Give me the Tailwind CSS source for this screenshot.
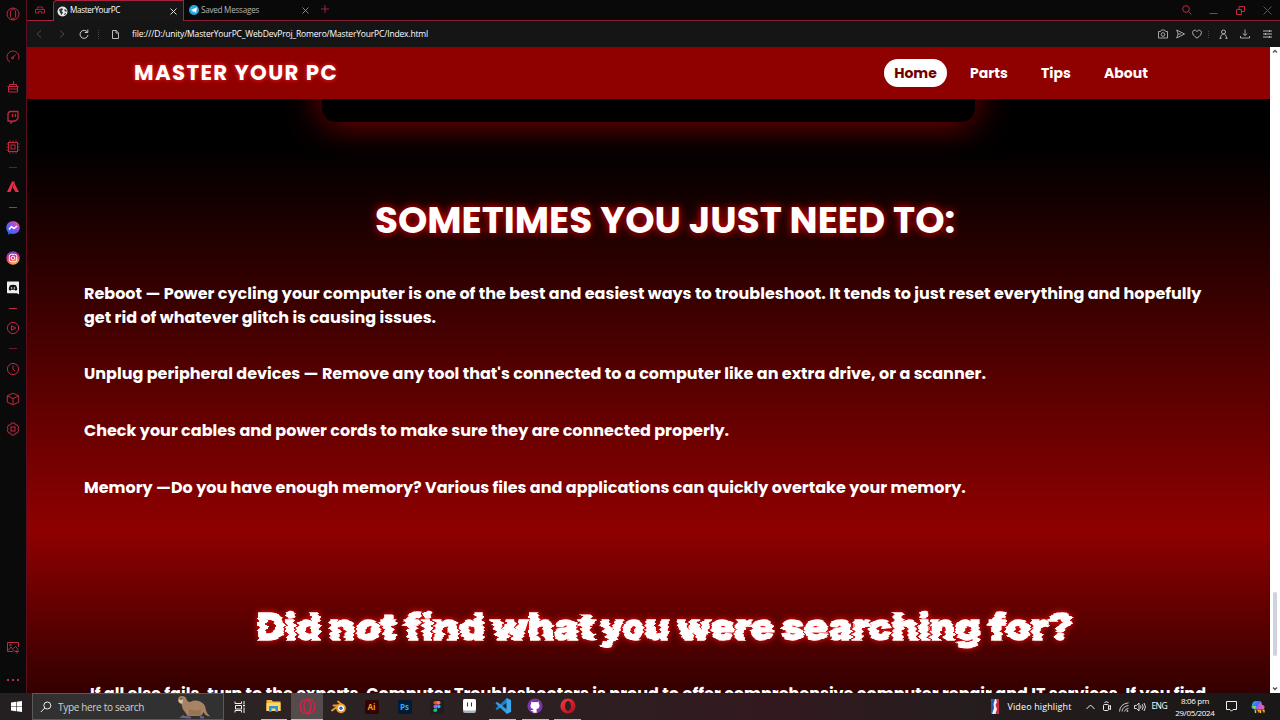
<!DOCTYPE html>
<html lang="en">
<head>
<meta charset="utf-8">
<title>MasterYourPC</title>
<script src="https://cdn.jsdelivr.net/npm/@tailwindcss/browser@4"></script>
</head>
<body class="w-[1280px] h-[720px] overflow-hidden bg-black flex flex-col font-['Open_Sans',sans-serif]">
<svg class="absolute size-0">
  <defs>
    <linearGradient id="msg" x1="0" y1="1" x2="1" y2="0"><stop offset="0" stop-color="#0a7cff"/><stop offset=".55" stop-color="#8a4cf5"/><stop offset="1" stop-color="#ff5c80"/></linearGradient>
    <linearGradient id="ig" x1=".2" y1="0" x2=".5" y2="1"><stop offset="0" stop-color="#6a3be0"/><stop offset=".5" stop-color="#e0307a"/><stop offset="1" stop-color="#fdb53c"/></linearGradient>
    <linearGradient id="cp" x1="0" y1="0" x2="1" y2=".6"><stop offset="0" stop-color="#2ab8f2"/><stop offset=".45" stop-color="#3b6cf0"/><stop offset=".6" stop-color="#c25ae0"/><stop offset="1" stop-color="#f25a9c"/></linearGradient>
    <linearGradient id="op" x1="0" y1="0" x2="1" y2="1"><stop offset="0" stop-color="#ff3b44"/><stop offset="1" stop-color="#a80a14"/></linearGradient>
  </defs>
</svg>

<div class="flex h-[693px]">
  <!-- GX sidebar -->
  <aside class="w-[27px] shrink-0 bg-[#0a0a0a] border-r border-[#5c0f22] flex flex-col items-center text-[#c2283f]">
    <div class="h-[27px] flex items-center"><svg width="14" height="14" viewBox="0 0 14 14" fill="none" stroke="currentColor"><circle cx="7" cy="7" r="6"/><ellipse cx="7" cy="7" rx="2.7" ry="5"/></svg></div>
    <div class="h-[30px] mt-[15px] flex items-center"><svg width="14" height="14" viewBox="0 0 14 14" fill="none" stroke="currentColor"><path d="M4 12.2A6 6 0 1 1 12.4 9.6"/><path d="M9.5 4.5 7 7.5"/><circle cx="6.5" cy="8" r="1"/></svg></div>
    <div class="h-[30px] flex items-center"><svg width="14" height="14" viewBox="0 0 14 14" fill="none" stroke="currentColor"><path d="M1.500 6.500h11M2.500 6.500v5.500h9V6.500M3 9h8M3.500 6.500V4.500h7v2M7.500 4.500V1"/></svg></div>
    <div class="h-[30px] flex items-center"><svg width="14" height="14" viewBox="0 0 14 14" fill="none" stroke="currentColor"><path stroke-width="1.300" d="M3.500 1.500h8.500v7l-2.500 2.500H7L5 13v-2H2V3.500zM6.500 4v3M9.500 4v3"/></svg></div>
    <div class="h-[30px] flex items-center"><svg width="14" height="14" viewBox="0 0 14 14" fill="none" stroke="currentColor"><rect x="2.500" y="2.500" width="9" height="9"/><rect x="5" y="5" width="4" height="4"/><path stroke-width=".9" d="M4 .5v2M7 .5v2M10 .5v2M4 11.500v2M7 11.500v2M10 11.500v2M.5 4h2M.5 7h2M.5 10h2M11.500 4h2M11.500 7h2M11.500 10h2"/></svg></div>
    <div class="h-[10px] flex items-center"><i class="w-2 h-px bg-[#701a28]"></i></div>
    <div class="h-[30px] flex items-center"><svg width="14" height="14" viewBox="0 0 14 14" fill="#ee2b48"><path d="M6 1.500h2.500L4.500 12H1zM8.500 1.500 9 4.500 13 12H9.500L6.800 7.500z"/></svg></div>
    <div class="h-[11px] flex items-center"><i class="w-2 h-px bg-[#c2283f]"></i></div>
    <div class="h-[30px] flex items-center"><svg width="14" height="14" viewBox="0 0 14 14"><path fill="url(#msg)" d="M7 .3C3.100.3.3 3 .3 6.700c0 2 .8 3.500 2 4.700v2.300L4.500 12.600c4.500 1.300 9.200-1.300 9.200-5.900C13.700 3 10.900.3 7 .3z"/><path d="M3 8.500 5.500 5.500 8 7.500 11 5" stroke="#fff" stroke-width="1.500" fill="none"/></svg></div>
    <div class="h-[30px] flex items-center"><svg width="14" height="14" viewBox="0 0 14 14"><circle cx="7" cy="7" r="6.700" fill="url(#ig)"/><g fill="none" stroke="#fff"><rect x="3.300" y="3.300" width="7.400" height="7.400" rx="2"/><circle cx="7" cy="7" r="1.800"/></g></svg></div>
    <div class="h-[30px] flex items-center"><svg width="14" height="14" viewBox="0 0 14 14"><path fill="#eee" d="M1.500.5h11l.5.500v12.500l-2-1.300H1.500L1 11.500V1z"/><path fill="#111" d="M4 4.300Q7 3.200 10 4.300 11.300 6.500 11.100 9L9.500 9.700 8.800 8.800H5.200l-.7.9L2.900 9Q2.700 6.500 4 4.300z"/><circle cx="5.600" cy="7" r=".8" fill="#eee"/><circle cx="8.400" cy="7" r=".8" fill="#eee"/></svg></div>
    <div class="h-[10px] flex items-center"><i class="w-2 h-px bg-[#c2283f]"></i></div>
    <div class="h-[30px] flex items-center"><svg width="14" height="14" viewBox="0 0 14 14" fill="none" stroke="currentColor"><circle cx="7" cy="7" r="5.600"/><path d="M5.500 4.700v4.600L9.800 7z"/></svg></div>
    <div class="h-[11px] flex items-center"><i class="w-2 h-px bg-[#701a28]"></i></div>
    <div class="h-[30px] flex items-center"><svg width="14" height="14" viewBox="0 0 14 14" fill="none" stroke="currentColor"><circle cx="7" cy="7" r="5.600"/><path d="M7 3.500V7l2 2"/></svg></div>
    <div class="h-[30px] flex items-center"><svg width="14" height="14" viewBox="0 0 14 14" fill="none" stroke="currentColor"><path d="M7 1.200l5.700 2.600v6.400L7 12.800l-5.700-2.600V3.800zM1.300 3.800 7 6.600l5.700-2.800M7 6.600v6"/></svg></div>
    <div class="h-[30px] flex items-center"><svg width="14" height="14" viewBox="0 0 14 14" fill="none" stroke="currentColor"><path d="M5.300 1h3.400l.6 1.800 2.200.2 1.200 3-1 1 1 1-1.200 3-2.200.2-.6 1.800H5.300l-.6-1.800L2.500 11 1.300 8l1-1-1-1 1.200-3 2.200-.2z"/><rect x="5" y="5" width="4" height="4"/></svg></div>
    <div class="h-[30px] mt-[188px] flex items-center"><svg width="14" height="14" viewBox="0 0 14 14" fill="none" stroke="currentColor"><path d="M12.500 7V2.500h-11v9H7M2 10.500 5 7l3.500 4.500M7.500 8.500l2-2 3 3"/><circle cx="4.500" cy="5" r=".8"/><path d="M9 11.500h4M11 9.500v4"/></svg></div>
    <div class="mt-[17px] flex gap-[3px]"><i class="size-[2px] bg-[#c2283f]"></i><i class="size-[2px] bg-[#c2283f]"></i><i class="size-[2px] bg-[#c2283f]"></i></div>
  </aside>

  <div class="flex-1 min-w-0 flex flex-col">
    <!-- tab strip -->
    <div class="h-[21px] shrink-0 bg-[#090909] flex text-[#b4b4b4] leading-none">
      <div class="w-[26px] border-b border-[#a8203c] flex items-center justify-center"><svg width="10" height="8" viewBox="0 0 10 8" fill="none" stroke="#a8203c"><path d="M2 3.500 2.500 1h5L8 3.500M.5 3.500h9v3.500h-3V5.500h-3V7h-3z"/></svg></div>
      <div class="w-[131px] bg-[#161616] border-t border-x border-[#a8203c] rounded-tl-[4px] flex items-center pl-[3px] pr-[6px] text-white">
        <svg width="11" height="11" viewBox="0 0 11 11"><circle cx="5.500" cy="5.500" r="5" fill="#e8e8e8"/><path fill="#333" d="M2 3.500 5 2l1 1.500L4.500 5 6 6.500 4.500 9 3 6.500zM7.500 3l2 1v2L7.500 5zM7 8l1.500-1 .5 1L7.500 9z"/></svg>
        <span class="ml-[2px] -mt-px whitespace-nowrap text-[8.200px] tracking-[-0.38px]">MasterYourPC</span>
        <svg class="ml-auto" width="7" height="7" viewBox="0 0 7 7" stroke="#ddd"><path d="M.5.5l6 6M6.500.5l-6 6"/></svg>
      </div>
      <div class="flex-1 border-b border-[#8a1c34] flex items-center pl-[5px]">
        <svg width="10" height="10" viewBox="0 0 10 10"><circle cx="5" cy="5" r="5" fill="#2ea6de"/><path fill="#fff" d="M1.800 5 8 2.300 7 7.800 4.800 6.300 4 7.500 3.700 5.800z"/></svg>
        <span class="ml-[2px] whitespace-nowrap text-[8.200px] tracking-[-0.29px]">Saved Messages</span>
        <svg class="ml-[43px]" width="7" height="7" viewBox="0 0 7 7" stroke="#aaa" stroke-width=".8"><path d="M.5.5l6 6M6.500.5l-6 6"/></svg>
        <svg class="ml-[12px] -mt-[2px]" width="8" height="8" viewBox="0 0 8 8" stroke="#a8203c"><path d="M4 0v8M0 4h8"/></svg>
        <div class="ml-auto flex items-center mr-[8px] text-[#c2283f]">
          <svg width="10" height="10" viewBox="0 0 10 10" fill="none" stroke="currentColor"><circle cx="4" cy="4" r="3.300"/><path d="M6.500 6.500 9.500 9.500"/></svg>
          <svg class="ml-[17px]" width="9" height="9" viewBox="0 0 9 9" stroke="currentColor"><path d="M.5 7.500h8"/></svg>
          <svg class="ml-[18px]" width="9" height="9" viewBox="0 0 9 9" fill="none" stroke="currentColor"><path d="M.5 3.500h5v5h-5zM3 3.500v-3h5.500v5h-3"/></svg>
          <svg class="ml-[18px]" width="9" height="9" viewBox="0 0 9 9" stroke="currentColor"><path d="M.5.5l8 8M8.500.5l-8 8"/></svg>
        </div>
      </div>
    </div>
    <!-- address bar -->
    <div class="h-[26px] shrink-0 bg-[#151515] flex items-center text-white text-[8.500px] leading-none">
      <svg class="ml-[9px]" width="6" height="8" viewBox="0 0 6 8" fill="none" stroke="#4c4c4c"><path d="M5 .5 1 4l4 3.500"/></svg>
      <svg class="ml-[17px]" width="6" height="8" viewBox="0 0 6 8" fill="none" stroke="#4c4c4c"><path d="M1 .5 5 4 1 7.500"/></svg>
      <svg class="ml-[14px]" width="10" height="10" viewBox="0 0 10 10" fill="none" stroke="#ccc"><path d="M8.300 3A4 4 0 1 0 9 6M8.800.5v3H5.800"/></svg>
      <i class="ml-[9px] h-[9px] border-l border-dotted border-[#444]"></i>
      <svg class="ml-[13px]" width="7" height="9" viewBox="0 0 7 9" fill="none" stroke="#bbb"><path d="M.5.5h3.700l2.300 2.300v5.700h-6zM4 .5v2.500h2.500"/></svg>
      <span class="ml-[13px] whitespace-nowrap tracking-[-0.17px]">file:///D:/unity/MasterYourPC_WebDevProj_Romero/MasterYourPC/Index.html</span>
      <div class="ml-auto flex items-center mr-[8px] text-[#b5b5b5]">
        <svg width="10" height="10" viewBox="0 0 10 10" fill="none" stroke="currentColor" stroke-width=".9"><path d="M.5 2.500h2l1-1.500h3l1 1.500h2v6.500h-9z"/><circle cx="5" cy="5.500" r="1.800"/></svg>
        <svg class="ml-[8px]" width="9" height="10" viewBox="0 0 9 10" fill="none" stroke="currentColor" stroke-width=".9"><path d="M.7 1 8.500 5 .7 9l1.500-4zM2.200 5h3"/></svg>
        <svg class="ml-[7px]" width="10" height="10" viewBox="0 0 10 10" fill="none" stroke="currentColor"><path d="M5 9.200C2 7 .6 5.500.6 3.500.6 1 3.800.3 5 2.500 6.200.3 9.400 1 9.400 3.500c0 2-1.400 3.500-4.400 5.700z"/></svg>
        <i class="ml-[6px] h-[7px] border-l border-dotted border-[#444]"></i>
        <svg class="ml-[10px]" width="9" height="10" viewBox="0 0 9 10" fill="none" stroke="currentColor"><circle cx="4.500" cy="3" r="2"/><path d="M1.500 9.500C1.500 6.500 3 5 4.500 5S7.500 6.500 7.500 9.500M.5 9.300h2M6.500 9.300h2"/></svg>
        <svg class="ml-[12px]" width="10" height="10" viewBox="0 0 10 10" fill="none" stroke="currentColor" stroke-width=".9"><path d="M5 .5v6M2.800 4.500 5 6.500l2.200-2M.5 7v2h9V7"/></svg>
        <svg class="ml-[13px]" width="9" height="8" viewBox="0 0 9 8" fill="none" stroke="currentColor"><path d="M0 1h9M0 4h9M0 7h9M6.500 0v2M2.500 3v2M6.500 6v2"/></svg>
      </div>
    </div>

    <div class="flex flex-1 min-h-0">
      <!-- page -->
      <main class="flex-1 min-w-0 overflow-hidden relative bg-[linear-gradient(to_bottom,#000_0px,#000_100px,#8f0000_483px,#000_735px)] font-['Poppins','Inter',sans-serif] text-white">
        <nav class="relative z-10 h-[52px] bg-[#8f0000] flex items-center pl-[107px] pr-[122px] text-[14px] font-bold">
          <span class="text-[21.300px] tracking-[1.37px] whitespace-nowrap [text-shadow:0_0_5px_#ff2a2a]">MASTER YOUR PC</span>
          <div class="ml-auto flex items-center whitespace-nowrap">
            <span class="h-[28px] w-[63px] rounded-full bg-white text-[#6d0000] flex items-center justify-center">Home</span>
            <span class="ml-[23px] w-[38px]">Parts</span>
            <span class="ml-[33px] w-[30px]">Tips</span>
            <span class="ml-[33px] w-[44px]">About</span>
          </div>
        </nav>
        <div class="ml-[295px] w-[653px] h-[60px] -mt-[37px] rounded-[14px] bg-black shadow-[0_2px_36px_rgba(160,0,0,0.85)]"></div>
        <h2 class="mt-[73px] h-[50px] leading-[50px] pl-[348px] text-[37.330px] font-bold whitespace-nowrap [text-shadow:0_0_8px_#ff0000]">SOMETIMES YOU JUST NEED TO:</h2>
        <div class="mt-[37px] pl-[57px] text-[16px] font-bold leading-[23.5px] whitespace-nowrap">
          <p>Reboot — Power cycling your computer is one of the best and easiest ways to troubleshoot. It tends to just reset everything and hopefully<br>get rid of whatever glitch is causing issues.</p>
          <p class="mt-[33px]">Unplug peripheral devices — Remove any tool that's connected to a computer like an extra drive, or a scanner.</p>
          <p class="mt-[33px]">Check your cables and power cords to make sure they are connected properly.</p>
          <p class="mt-[33.500px]">Memory —Do you have enough memory? Various files and applications can quickly overtake your memory.</p>
        </div>
        <svg class="mt-[100px] block" width="1243" height="64" viewBox="0 0 1243 64">
          <defs><filter id="glitch" x="-2%" y="-20%" width="104%" height="140%" color-interpolation-filters="sRGB">
            <feTurbulence type="fractalNoise" baseFrequency="0.04 0.35" numOctaves="1" seed="11"/>
            <feColorMatrix values="1 0 0 0 0  0 1 0 0 0  0 0 0 0 .5  0 0 0 0 1" result="n"/>
            <feDisplacementMap in="SourceGraphic" in2="n" scale="9" xChannelSelector="R" yChannelSelector="B" result="e"/>
            <feGaussianBlur in="e" stdDeviation="3" result="b"/>
            <feFlood flood-color="#ff1010"/><feComposite in2="b" operator="in" result="g"/>
            <feMerge><feMergeNode in="g"/><feMergeNode in="e"/></feMerge>
          </filter></defs>
          <g filter="url(#glitch)" font-family="Inter" font-size="36.500" font-weight="900" fill="#fff" stroke="#fff" stroke-width="1.300">
            <text y="41"><tspan x="230" textLength="64" lengthAdjust="spacingAndGlyphs">Did</tspan> <tspan x="302" textLength="68" lengthAdjust="spacingAndGlyphs">not</tspan> <tspan x="377" textLength="81" lengthAdjust="spacingAndGlyphs">find</tspan> <tspan x="465" textLength="103" lengthAdjust="spacingAndGlyphs">what</tspan> <tspan x="573" textLength="69" lengthAdjust="spacingAndGlyphs">you</tspan> <tspan x="650" textLength="97" lengthAdjust="spacingAndGlyphs">were</tspan> <tspan x="754" textLength="200" lengthAdjust="spacingAndGlyphs">searching</tspan> <tspan x="962" textLength="84" lengthAdjust="spacingAndGlyphs">for?</tspan></text>
          </g>
        </svg>
        <p class="mt-[19px] pl-[63px] text-[16px] font-bold leading-[23.5px] whitespace-nowrap">If all else fails, turn to the experts. Computer Troubleshooters is proud to offer comprehensive computer repair and IT services. If you find</p>
      </main>
      <div class="w-[10px] bg-white flex flex-col items-center">
        <svg class="mt-[2px]" width="6" height="5" viewBox="0 0 6 5" fill="none" stroke="#555" stroke-width="1.300"><path d="M1 3.500 3 1.500l2 2"/></svg>
        <i class="mt-[538px] w-[4px] h-[64px] bg-[#cdd3dc] rounded-full"></i>
        <svg class="mt-auto mb-[2px]" width="6" height="5" viewBox="0 0 6 5" fill="none" stroke="#555" stroke-width="1.300"><path d="M1 1.500 3 3.500l2-2"/></svg>
      </div>
    </div>
  </div>
</div>

<!-- taskbar -->
<footer class="h-[27px] bg-[linear-gradient(to_right,#241f20,#2c2324_20%,#2b2122_40%,#33191f_60%,#251d1e_75%,#191717)] flex items-stretch text-white text-[9px] leading-none">
  <div class="w-[32px] flex items-center justify-center"><svg width="11" height="11" viewBox="0 0 11 11" fill="#fff"><path d="M0 1.500 5 .8v4.400H0zM5.600.7 11 0v5.200H5.600zM0 5.800h5v4.400L0 9.500zM5.600 5.800H11V11l-5.400-.7z"/></svg></div>
  <div class="w-[192px] bg-[#313131] border border-[#5a5a5a] flex items-center pl-[7px]">
    <svg width="12" height="12" viewBox="0 0 12 12" fill="none" stroke="#eee"><circle cx="7.300" cy="4.500" r="3.500"/><path d="M4.800 7 .8 11"/></svg>
    <span class="ml-[6px] whitespace-nowrap text-[#d0d0d0] text-[10px] tracking-[-0.32px]">Type here to search</span>
    <svg class="ml-[33px]" width="34" height="24" viewBox="0 0 34 24"><path fill="#a98263" d="M1 5Q1 1 5 1q4 0 4.500 3.500Q10.500 7 13 7q5-2.500 10-.5 5 2 5.500 6.500Q29 18 33.500 21.500 28 21 26.500 17q-1 2.500-2.500 4H10.500L8 17Q5 14 4.500 9 1 8 1 5z"/><path fill="#d8c0a6" d="M1.500 5.500Q3 3 6 5l-.5 3.500Q2 8.500 1.500 5.500z"/><path fill="#8d6a50" d="M12 14q6 3 12 0l-.5 6.500H12z" opacity=".6"/><path d="M7 20.500l-2 1.500h5M11 20l-1 2.500h4M23 20l1 2.500h3" stroke="#6d6088" stroke-width="1.800" fill="none"/><circle cx="4" cy="4" r=".8" fill="#222"/></svg>
  </div>
  <div class="w-[32px] flex items-center justify-center"><svg width="12" height="12" viewBox="0 0 12 12" fill="none" stroke="#eee"><path d="M1 .5v2h6.500v-2M1.500 4.500h6v3.500h-6zM1 11.500v-2h6.500v2M10 0v3M10 6.500V12"/><path fill="#eee" d="M9.500 4h1v1h-1z"/></svg></div>
  <div class="w-[35px] flex flex-col items-center"><svg class="mt-[5px]" width="15" height="15" viewBox="0 0 15 15"><path fill="#f5b93a" d="M.5 2h5l1.500 1.500h7.500V13H.5z"/><path fill="#ffd768" d="M.5 5h14v8H.5z"/><path fill="#2f8fd8" d="M3 8h9v6H9.500v-3.500h-4V14H3z"/></svg><i class="mt-auto w-[26px] h-[1.500px] bg-[#f5a3b0]"></i></div>
  <div class="w-[32px] bg-[#564b4d] flex flex-col items-center"><svg class="mt-[5px]" width="17" height="17" viewBox="0 0 17 17" fill="none" stroke="#ea1c45" stroke-width="1.200"><circle cx="8.500" cy="8.500" r="7.500"/><ellipse cx="8.500" cy="8.500" rx="3.500" ry="6.200"/></svg><i class="mt-auto w-full h-[1.500px] bg-[#f5a3b0]"></i></div>
  <div class="w-[32px] flex items-center justify-center"><svg width="16" height="14" viewBox="0 0 16 14"><path d="M1 10.500 8.500 5M2.500 5.500H9M7 1.500l5 4" stroke="#f09a2c" stroke-width="1.800" stroke-linecap="round"/><circle cx="10" cy="8.300" r="4.900" fill="#f09a2c"/><circle cx="10" cy="8.300" r="3" fill="#fff"/><circle cx="10" cy="8.300" r="1.700" fill="#2566a8"/></svg></div>
  <div class="w-[33px] flex items-center justify-center"><span class="w-[14px] h-[14px] rounded-[2px] bg-[#320300] text-[#ff9a1a] font-bold text-[8px] flex items-center justify-center">Ai</span></div>
  <div class="w-[33px] flex items-center justify-center"><span class="w-[14px] h-[14px] rounded-[2px] bg-[#001c33] text-[#31a8ff] font-bold text-[8px] flex items-center justify-center">Ps</span></div>
  <div class="w-[32px] flex items-center justify-center"><span class="w-[14px] h-[14px] rounded-[2px] bg-[#1e1e1f] flex items-center justify-center"><svg width="8" height="11" viewBox="0 0 8 11"><path fill="#f24e1e" d="M4 0v3.600H2.200a1.800 1.800 0 0 1 0-3.600z"/><path fill="#ff7262" d="M4 0h1.800a1.800 1.800 0 0 1 0 3.600H4z"/><path fill="#a259ff" d="M4 3.700v3.600H2.200a1.800 1.800 0 0 1 0-3.600z"/><circle cx="5.800" cy="5.500" r="1.800" fill="#1abcfe"/><path fill="#0acf83" d="M4 7.400v1.800a1.800 1.800 0 1 1-1.800-1.800z"/></svg></span></div>
  <div class="w-[33px] flex items-center justify-center"><svg class="-mt-[2px]" width="13" height="14" viewBox="0 0 13 14"><rect width="13" height="14" rx="2" fill="#aab0ba"/><rect width="13" height="11.500" rx="2" fill="#fff"/><path d="M4.500 3.500v4M8.500 3.500v4" stroke="#333"/></svg></div>
  <div class="w-[33px] flex flex-col items-center"><svg class="mt-[5px]" width="16" height="16" viewBox="0 0 16 16"><path fill="#1b80c8" d="M12 0 .5 10.500l1.500 1.700L12 4.500z"/><path fill="#2c9fe6" d="M12 16 .5 5.500 2 3.800l10 7.700z"/><path fill="#38a8f0" d="M11.500 0 16 2v12l-4.500 2z"/></svg><i class="mt-auto w-[27px] h-[1.500px] bg-[#f5a3b0]"></i></div>
  <div class="w-[32px] flex flex-col items-center"><svg class="mt-[5px]" width="16" height="16" viewBox="0 0 16 16"><circle cx="8" cy="8" r="7.600" fill="#7c35a8"/><path fill="#fff" d="M4.300 3.500 6 4.300q2-.5 4 0l1.700-.8.2 2.300q1.200 1.500.3 3.500-.7 1.400-2.700 1.700l.3 3.700H6.200v-1.500q-2 .3-2.500-1.500 1.500.7 2.500 0l.2-.7q-2-.3-2.700-1.700-.8-2 .4-3.500z"/></svg><i class="mt-auto w-[27px] h-[1.500px] bg-[#f5a3b0]"></i></div>
  <div class="w-[33px] flex flex-col items-center"><svg class="mt-[5px]" width="16" height="16" viewBox="0 0 16 16"><path fill="url(#op)" fill-rule="evenodd" d="M8 .4a7.600 7.600 0 1 0 0 15.200A7.600 7.600 0 0 0 8 .4zM8 3c1.700 0 3 2.200 3 5s-1.300 5-3 5-3-2.200-3-5 1.300-5 3-5z"/></svg><i class="mt-auto w-[27px] h-[1.500px] bg-[#f5a3b0]"></i></div>
  <div class="ml-auto flex items-center pr-[15px] whitespace-nowrap">
    <svg width="8" height="15" viewBox="0 0 8 15"><rect width="8" height="15" rx="2" fill="#eee"/><path fill="#1d57b0" d="M0 2Q0 0 2 0h2L2.500 5 3 9 1 15Q0 15 0 13z"/><path fill="#d0263a" d="M5 0h1q2 0 2 2v11q0 2-2 2H4.500L6 10 4.500 6 6 3z"/></svg>
    <span class="ml-[9px] text-[9px] tracking-[0.11px]">Video highlight</span>
    <svg class="ml-[15px]" width="9" height="6" viewBox="0 0 9 6" fill="none" stroke="#eee"><path d="M.5 5 4.500 1l4 4"/></svg>
    <svg class="ml-[8px]" width="8" height="11" viewBox="0 0 8 11" fill="none" stroke="#eee"><rect x=".5" y="3.500" width="5" height="6" rx="1"/><path d="M5.500 5.500l2-1v4l-2-1M1.500 1.500Q3.500 0 5.500 1.500"/></svg>
    <svg class="ml-[8px]" width="10" height="10" viewBox="0 0 10 10" fill="none" stroke="#ddd" stroke-width=".9"><path d="M.5 9.500Q1 2 9.500.8M3 9.500Q3.500 4.500 9.500 3.500M5.500 9.500Q6 7 9.500 6.300"/><circle cx="8.500" cy="9" r=".6"/></svg>
    <svg class="ml-[5px]" width="12" height="10" viewBox="0 0 12 10" fill="none" stroke="#eee" stroke-width=".9"><path d="M.5 3.500h2L5 1v8L2.500 6.500h-2zM6.500 3.500q1 1.500 0 3M8.200 2.200q2 2.800 0 5.600M10 1q3 4 0 8"/></svg>
    <span class="ml-[5px] text-[8.500px] tracking-[-0.6px]">ENG</span>
    <div class="ml-[8px] w-[40px] flex flex-col items-center gap-[4px] text-[8px]"><span class="tracking-[-0.3px]">8:06 pm</span><span class="tracking-[-0.32px]">29/05/2024</span></div>
    <svg class="ml-[11px]" width="11" height="11" viewBox="0 0 11 11" fill="none" stroke="#eee"><path d="M.5.5h10v8H7L5.500 10.200 4 8.500H.5z"/></svg>
    <svg class="ml-[14px]" width="14" height="14" viewBox="0 0 14 14"><path fill="url(#cp)" d="M4.500 1h4q1.500 0 2 1.500l.7 2.500h.8q2 .5 1.500 2.500l-1 3.500Q12 13 10 13H5.500Q4 13 3.500 11L3 9H2Q0 8.500.5 6.500l1-3.500Q2.500 1 4.500 1z"/><path fill="#7ed957" d="M.8 6 3 9h1.500L5 6z"/><rect x="3.500" y="9.500" width="10.500" height="4" rx="1" fill="#2b2412"/><path stroke="#f0b83a" stroke-width="1.300" d="M4.500 10v3M6.500 10.500h1.500v2M9.500 10v3M11.500 10.500h1.500v2"/></svg>
  </div>
</footer>
</body>
</html>
